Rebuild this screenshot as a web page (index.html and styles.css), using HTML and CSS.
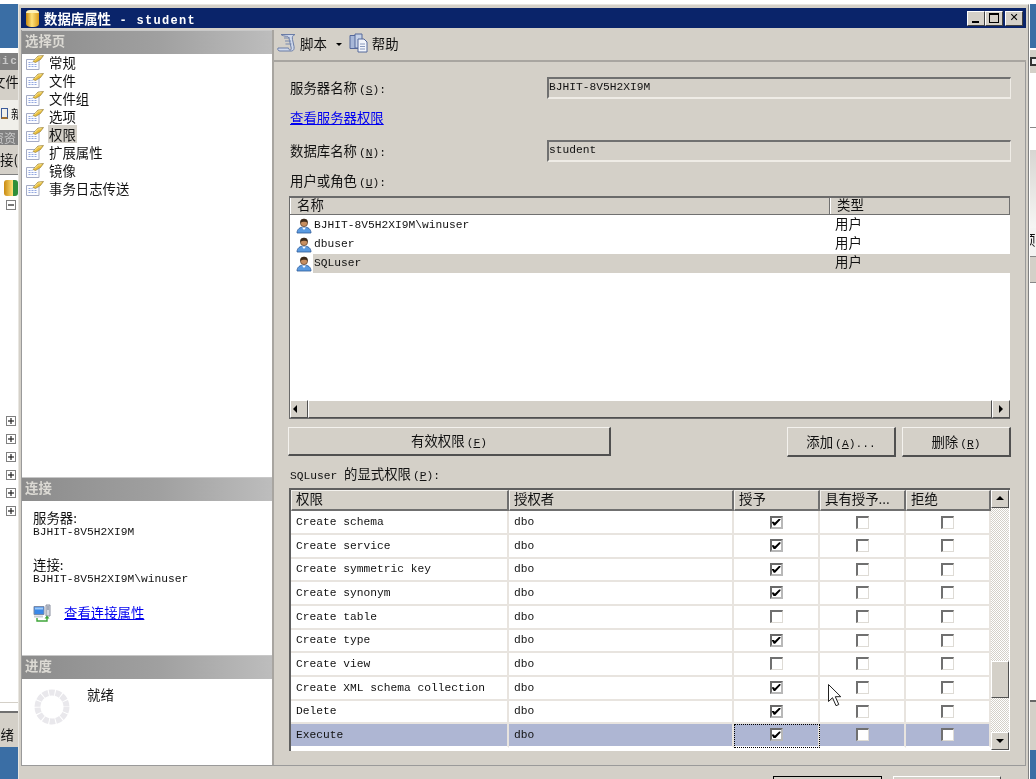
FILE: index.html
```html
<!DOCTYPE html>
<html lang="zh">
<head>
<meta charset="utf-8">
<title>数据库属性 - student</title>
<link rel="stylesheet" href="styles.css">
</head>
<body>
<svg class="defs" width="0" height="0" aria-hidden="true">
  <defs>
    <symbol id="page" viewBox="0 0 18 16">
      <path d="M.5 5.500H13v10H.5z" fill="#fbfcff" stroke="#a4abc4"/>
      <path d="M2.500 8.500h4M2.500 10.500h8M2.500 12.500h8" stroke="#93a8e0" stroke-dasharray="2 1"/>
      <path d="M7 7.500 12 2l5.500-.5-3 4-5 3z" fill="#e8bd3a" stroke="#8a7430" stroke-width=".6"/>
      <path d="M8.500 6.500 12.500 3l3-.3" fill="none" stroke="#fff2b0" stroke-width=".8"/>
    </symbol>
    <symbol id="user" viewBox="0 0 16 16">
      <path d="M1 15c0-4 3-6 7-6s7 2 7 6z" fill="#5a9ae0" stroke="#2f5a98" stroke-width=".8"/>
      <path d="M6 9.500 8 12l2-2.500" fill="#fff"/>
      <circle cx="8" cy="5" r="3.600" fill="#c88f60" stroke="#5a3e28" stroke-width=".7"/>
      <path d="M4.400 5C4 1.500 6 .8 8 .8s4 .7 3.600 4.200C10.500 3.400 6 3.400 4.400 5z" fill="#3c2a1a"/>
    </symbol>
    <symbol id="script" viewBox="0 0 20 20">
      <path d="M4 1.500h14c-2.500 1-3 2.500-2.500 5l1.500 7c.5 2.500-.5 4.500-2.500 4.500H3c-1.800 0-2.700-1.300-2-3h10.500c0 1.200.8 2 1.700 2 1 0 1.300-1.300.8-3L12.500 7.500C12 4.500 11 3 9.500 3.300 8 3.300 5 2.500 4 1.500z" fill="#cfd9ec" stroke="#6a7ca6"/>
      <path d="M7 5h6M8 8h6M8.500 11h6" stroke="#7587ae"/>
    </symbol>
    <symbol id="help" viewBox="0 0 20 20">
      <path d="M1 2.500h8v13H1z" fill="#a8b8d8" stroke="#55689a"/>
      <path d="M6 1h7v14H6z" fill="#c6d2e8" stroke="#55689a"/>
      <path d="M9 6h6l3 3v10H9z" fill="#f2f5fb" stroke="#55689a"/>
      <path d="M11 11h5M11 13.500h5M11 16h5" stroke="#8898bc"/>
    </symbol>
    <symbol id="conn" viewBox="0 0 18 18">
      <path d="M1 2.500h10v8H1z" fill="#3a88e8" stroke="#7a8aa8"/>
      <path d="M2 3.500h8v2H2z" fill="#9cc8f8"/>
      <path d="M1 11.500h9v2H1z" fill="#c8ccd4"/>
      <path d="M13 1h4v11h-4z" fill="#d4d8e0" stroke="#8a90a0"/>
      <path d="M14 3h2M14 5h2" stroke="#7a8090"/>
      <path d="M4 14v3h10v-3" fill="none" stroke="#3fa53a" stroke-width="1.400"/>
      <path d="m11.500 14.500 2.500-3 2.500 3z" fill="#3fa53a"/>
    </symbol>
  </defs>
</svg>

<div class="desktop">
  <aside class="bg-win bg-left">
    <div class="bg-blue"></div>
    <div class="bg-cap">Mic</div>
    <div class="bg-menu"><span class="shift">文件</span></div>
    <div class="bg-tool"><span class="tool-mark"></span><span>新</span></div>
    <div class="bg-res"><span class="shift">资资</span></div>
    <div class="bg-conn">接(</div>
    <div class="bg-tree">
      <div class="tree-db"></div>
      <span class="box minus"></span>
      <div class="tree-plus">
        <span class="box plus"></span><span class="box plus"></span><span class="box plus"></span>
        <span class="box plus"></span><span class="box plus"></span><span class="box plus"></span>
      </div>
    </div>
    <div class="bg-status"><span class="shift-more">就绪</span></div>
    <div class="bg-blue fill"></div>
  </aside>

  <aside class="bg-win bg-right">
    <div class="bg-blue"></div>
    <div class="r-tool"><span class="r-box"></span></div>
    <div class="r-white"></div>
    <div class="r-grad"></div>
    <div class="r-pre">预</div>
    <div class="r-line"></div>
    <div class="r-gray"></div>
    <div class="r-status"></div>
    <div class="bg-blue fill"></div>
  </aside>

  <section class="dialog">
    <header class="titlebar">
      <span class="can"></span>
      <span class="title"><span class="cjk">数据库属性</span><span class="mono"> - student</span></span>
      <div class="winbtns">
        <button class="winbtn"><i class="g-min"></i></button>
        <button class="winbtn"><i class="g-max"></i></button>
        <button class="winbtn gap"><span class="g-x">✕</span></button>
      </div>
    </header>

    <div class="body">
      <nav class="side">
        <div class="pane">
          <h2 class="pane-head">选择页</h2>
          <ul class="pages">
            <li><svg class="pg"><use href="#page"/></svg><span>常规</span></li>
            <li><svg class="pg"><use href="#page"/></svg><span>文件</span></li>
            <li><svg class="pg"><use href="#page"/></svg><span>文件组</span></li>
            <li><svg class="pg"><use href="#page"/></svg><span>选项</span></li>
            <li><svg class="pg"><use href="#page"/></svg><span class="cur">权限</span></li>
            <li><svg class="pg"><use href="#page"/></svg><span>扩展属性</span></li>
            <li><svg class="pg"><use href="#page"/></svg><span>镜像</span></li>
            <li><svg class="pg"><use href="#page"/></svg><span>事务日志传送</span></li>
          </ul>
        </div>
        <div class="pane">
          <h2 class="pane-head">连接</h2>
          <div class="conn">
            <div class="cjk ln">服务器:</div>
            <div class="mono ln">BJHIT-8V5H2XI9M</div>
            <div class="cjk ln next">连接:</div>
            <div class="mono ln">BJHIT-8V5H2XI9M\winuser</div>
            <div class="conn-link"><svg class="ci"><use href="#conn"/></svg><a class="cjk link" href="#">查看连接属性</a></div>
          </div>
        </div>
        <div class="pane">
          <h2 class="pane-head">进度</h2>
          <div class="prog">
            <svg class="spin" viewBox="0 0 36 36"><circle cx="18" cy="18" r="14.500" fill="none" stroke="#e9e8ec" stroke-width="6" stroke-dasharray="5.500 1"/></svg>
            <span class="cjk ready">就绪</span>
          </div>
        </div>
      </nav>

      <main class="main">
        <div class="toolbar">
          <svg class="ti"><use href="#script"/></svg><span class="cjk">脚本</span>
          <span class="caret"></span>
          <svg class="ti"><use href="#help"/></svg><span class="cjk">帮助</span>
        </div>
        <div class="panel">
          <div class="form-row first">
            <label class="cjk">服务器名称<span class="mn">(<u>S</u>):</span></label>
            <div class="field mono">BJHIT-8V5H2XI9M</div>
          </div>
          <a class="cjk link srv" href="#">查看服务器权限</a>
          <div class="form-row second">
            <label class="cjk">数据库名称<span class="mn">(<u>N</u>):</span></label>
            <div class="field mono">student</div>
          </div>
          <label class="cjk cap users">用户或角色<span class="mn">(<u>U</u>):</span></label>

          <div class="list">
            <div class="list-head cjk"><div class="h">名称</div><div class="h">类型</div></div>
            <div class="list-rows">
              <div class="lrow"><svg class="ui"><use href="#user"/></svg><span class="mono lname">BJHIT-8V5H2XI9M\winuser</span><span class="cjk ltype">用户</span></div>
              <div class="lrow"><svg class="ui"><use href="#user"/></svg><span class="mono lname">dbuser</span><span class="cjk ltype">用户</span></div>
              <div class="lrow sel"><svg class="ui"><use href="#user"/></svg><span class="mono lname">SQLuser</span><span class="cjk ltype">用户</span></div>
            </div>
            <div class="hscroll">
              <button class="sb-btn"><i class="ar-l"></i></button>
              <div class="hthumb"></div>
              <button class="sb-btn"><i class="ar-r"></i></button>
            </div>
          </div>

          <div class="actions">
            <button class="btn cjk wide">有效权限<span class="mn">(<u>F</u>)</span></button>
            <span class="spacer"></span>
            <button class="btn cjk std">添加<span class="mn">(<u>A</u>)...</span></button>
            <button class="btn cjk std">删除<span class="mn">(<u>R</u>)</span></button>
          </div>

          <label class="cap perms"><span class="mono">SQLuser </span><span class="cjk">的显式权限</span><span class="mn">(<u>P</u>):</span></label>

          <div class="grid">
            <div class="grid-main">
              <div class="ghead cjk"><div>权限</div><div>授权者</div><div>授予</div><div>具有授予...</div><div>拒绝</div></div>
              <div class="grow"><div class="mono">Create schema</div><div class="mono">dbo</div><div><i class="cb on"></i></div><div><i class="cb"></i></div><div><i class="cb"></i></div></div>
              <div class="grow"><div class="mono">Create service</div><div class="mono">dbo</div><div><i class="cb on"></i></div><div><i class="cb"></i></div><div><i class="cb"></i></div></div>
              <div class="grow"><div class="mono">Create symmetric key</div><div class="mono">dbo</div><div><i class="cb on"></i></div><div><i class="cb"></i></div><div><i class="cb"></i></div></div>
              <div class="grow"><div class="mono">Create synonym</div><div class="mono">dbo</div><div><i class="cb on"></i></div><div><i class="cb"></i></div><div><i class="cb"></i></div></div>
              <div class="grow"><div class="mono">Create table</div><div class="mono">dbo</div><div><i class="cb"></i></div><div><i class="cb"></i></div><div><i class="cb"></i></div></div>
              <div class="grow"><div class="mono">Create type</div><div class="mono">dbo</div><div><i class="cb on"></i></div><div><i class="cb"></i></div><div><i class="cb"></i></div></div>
              <div class="grow"><div class="mono">Create view</div><div class="mono">dbo</div><div><i class="cb"></i></div><div><i class="cb"></i></div><div><i class="cb"></i></div></div>
              <div class="grow"><div class="mono">Create XML schema collection</div><div class="mono">dbo</div><div><i class="cb on"></i></div><div><i class="cb"></i></div><div><i class="cb"></i></div></div>
              <div class="grow"><div class="mono">Delete</div><div class="mono">dbo</div><div><i class="cb on"></i></div><div><i class="cb"></i></div><div><i class="cb"></i></div></div>
              <div class="grow active"><div class="mono">Execute</div><div class="mono">dbo</div><div class="focus"><i class="cb on"></i></div><div><i class="cb"></i></div><div><i class="cb"></i></div></div>
            </div>
            <div class="vscroll">
              <button class="sb-btn v"><i class="ar-u"></i></button>
              <div class="track t1"></div>
              <div class="vthumb"></div>
              <div class="track t2"></div>
              <button class="sb-btn v"><i class="ar-d"></i></button>
            </div>
          </div>
        </div>
      </main>
    </div>

    <footer class="foot">
      <button class="okbtn primary"></button>
      <button class="okbtn second-ok"></button>
    </footer>
  </section>

  <svg class="pointer" viewBox="0 0 14 24"><path d="M.5.500v17l4-3.800 3.500 8 2.800-1.200-3.500-7.800h5.500z" fill="#fff" stroke="#222" stroke-width="1"/></svg>
</div>
</body>
</html>
```
FILE: styles.css
```css
* { box-sizing: border-box; }
html, body { margin: 0; height: 100%; overflow: hidden; background: #fff; }
.defs { position: absolute; }
ul { margin: 0; padding: 0; list-style: none; }
h2 { margin: 0; }
button { padding: 0; margin: 0; font: inherit; color: inherit; }
u { text-decoration: underline; }

.cjk { font-family: "Noto Sans CJK SC", "Noto Sans", sans-serif; font-size: 13.4px; }
.mono { font-family: "Liberation Mono", "Noto Sans CJK SC", monospace; font-size: 11.25px; white-space: pre; }
.mn { font-family: "Liberation Mono", monospace; font-size: 11.25px; white-space: pre; margin-left: 2px; }
.link { color: #0000f0; text-decoration: underline; }

.desktop {
  position: relative; width: 1036px; height: 779px; overflow: hidden;
  background: #fff; color: #111; filter: blur(.35px);
}

/* windows behind the dialog */
.bg-win { position: absolute; top: 0; height: 779px; display: flex; flex-direction: column; overflow: hidden; padding-top: 4px; background: #fff; }
.bg-left { left: 0; width: 18px; }
.bg-right { left: 1030px; width: 6px; }
.bg-blue { height: 44px; flex: none; background: #3a6ea5; }
.bg-blue.fill { flex: 1; }
.bg-cap { margin-top: 5px; height: 17px; background: #808080; color: #c8c8c8; font: bold 11px/17px "Liberation Mono", monospace; letter-spacing: 1.5px; text-indent: -6px; white-space: nowrap; }
.bg-menu { height: 30px; background: #d4d0c8; font: 13.4px/22px "Noto Sans CJK SC", sans-serif; white-space: nowrap; overflow: hidden; }
.shift { display: block; margin-left: -8px; }
.shift-more { display: block; margin-left: -13px; }
.bg-tool { height: 30px; background: #f0efea; display: flex; align-items: center; gap: 3px; font: 12px "Noto Sans CJK SC", sans-serif; overflow: hidden; white-space: nowrap; padding-bottom: 4px; }
.tool-mark { width: 7px; height: 11px; flex: none; border: 1px solid #3a5a9a; border-bottom: 2px solid #a07030; margin-left: 1px; }
.bg-res { height: 15px; background: #808080; color: #c8c8c8; font: 12px/15px "Noto Sans CJK SC", sans-serif; overflow: hidden; white-space: nowrap; }
.bg-conn { height: 30px; background: #d4d0c8; font: 13.4px/28px "Noto Sans CJK SC", sans-serif; white-space: nowrap; border-bottom: 1px solid #808080; }
.bg-tree { height: 528px; flex: none; background: #fff; padding-top: 5px; border-bottom: 1px solid #d4d0c8; display: flex; flex-direction: column; }
.tree-db { width: 14px; height: 16px; margin-left: 4px; border-radius: 3px; background: linear-gradient(90deg, #c98a10, #ffe27a); border-right: 5px solid #2f8f3a; }
.box { position: relative; display: block; width: 10px; height: 10px; margin-left: 6px; border: 1px solid #808080; background: #fff; }
.box::before { content: ""; position: absolute; left: 1px; top: 3px; width: 6px; height: 2px; background: #222; transform: scaleY(.6); }
.plus::after { content: ""; position: absolute; left: 3px; top: 1px; width: 2px; height: 6px; background: #222; transform: scaleX(.6); }
.minus { margin-top: 4px; }
.tree-plus { margin-top: 206px; display: flex; flex-direction: column; gap: 8px; }
.bg-status { margin-top: 8px; height: 36px; flex: none; background: #d4d0c8; border-top: 2px solid #707070; padding-top: 10px; font: 13.4px/22px "Noto Sans CJK SC", sans-serif; overflow: hidden; white-space: nowrap; }
.r-tool { margin-top: 2px; height: 23px; background: #d4d0c8; padding-top: 7px; }
.r-box { display: block; width: 8px; height: 9px; border: 2px solid #333; background: #eee; }
.r-white { height: 55px; background: #fff; border-bottom: 1px solid #888; }
.r-grad { height: 78px; margin-top: 22px; background: linear-gradient(#d8d6d2, #f6f6f4); }
.r-pre { height: 29px; margin-left: -8px; font: 13.4px/22px "Noto Sans CJK SC", sans-serif; background: #f4f4f2; border-bottom: 1px solid #888; white-space: nowrap; }
.r-line { height: 26px; background: #d4d0c8; border-bottom: 1px solid #888; }
.r-gray { height: 419px; background: #fff; border-bottom: 2px solid #666; }
.r-status { height: 48px; flex: none; background: #d4d0c8; }

/* the dialog */
.dialog {
  position: absolute; left: 18px; top: 4px; width: 1011px; height: 775px;
  padding: 3px 2px 0; background: #d4d0c8;
  border: 1px solid #e8e6e1; border-right-color: #808080; border-bottom: 0;
  display: flex; flex-direction: column; overflow: hidden;
}
.titlebar { height: 20px; flex: none; background: #0a246a; color: #fff; display: flex; align-items: center; padding: 0 3px 0 5px; }
.can { width: 13px; height: 17px; flex: none; margin-right: 5px; border-radius: 4px 4px 5px 5px / 3px 3px 3px 3px; background: linear-gradient(90deg, #c98a10, #ffe27a 45%, #d99a18); border-top: 3px solid #fff2b8; }
.title { font-weight: bold; white-space: pre; }
.title .mono { font-size: 12px; letter-spacing: 1.3px; }
.winbtns { margin-left: auto; display: flex; }
.winbtn { position: relative; width: 18px; height: 15px; background: #d4d0c8; border: 1px solid; border-color: #fff #404040 #404040 #fff; display: block; }
.winbtn.gap { margin-left: 2px; }
.g-min { position: absolute; left: 4px; bottom: 2px; width: 7px; height: 2px; background: #000; }
.g-max { position: absolute; left: 3px; top: 1px; width: 10px; height: 10px; border: 1px solid #000; border-top-width: 2px; }
.g-x { position: absolute; left: 0; right: 0; top: -1px; font: bold 11px/14px "DejaVu Sans", sans-serif; color: #000; text-align: center; }

.body { height: 736px; flex: none; margin-top: 2px; display: flex; border-bottom: 1px solid #9a9a9a; }

/* left pages column */
.side { width: 251px; flex: none; border-left: 1px solid #9a9a9a; background: #fff; display: grid; grid-template-rows: 447px 178px 1fr; }
.pane { min-height: 0; }
.pane-head { height: 24px; padding-left: 3px; background: linear-gradient(90deg, #8c8c8c, #a0a0a0 55%, #bdbdbd); border-top: 1px solid #c8c8c8; color: #dcdad4; font: bold 13.4px/18px "Noto Sans CJK SC", sans-serif; }
.pages { margin-top: -1px; }
.pages li { height: 18px; display: flex; align-items: center; padding-left: 4px; font: 13.4px/18px "Noto Sans CJK SC", sans-serif; }
.pg { width: 18px; height: 16px; flex: none; margin-right: 4px; }
.pages span { padding: 0 1px; }
.cur { background: #d4d0c8; }
.conn { padding: 10px 0 0 11px; }
.ln { height: 14px; line-height: 14px; }
.ln.cjk { line-height: 12px; }
.next { margin-top: 19px; }
.conn-link { margin-top: 18px; display: flex; align-items: center; height: 18px; }
.conn-link .link { line-height: 14px; padding-bottom: 2px; }
.ci { width: 18px; height: 18px; flex: none; margin-right: 13px; }
.prog { display: flex; padding: 8px 0 0 12px; }
.spin { width: 36px; height: 36px; flex: none; margin-top: 2px; }
.ready { margin-left: 17px; line-height: 14px; }

/* right column */
.main { flex: 1; min-width: 0; border-left: 2px solid #a8a5a0; display: flex; flex-direction: column; }
.toolbar { height: 32px; flex: none; display: flex; align-items: center; padding: 0 0 4px 3px; border-bottom: 2px solid #a8a5a0; }
.ti { width: 20px; height: 20px; flex: none; margin-right: 3px; }
.caret { width: 0; height: 0; margin: 2px 7px 0 9px; border: 3px solid transparent; border-top: 3px solid #000; border-bottom: 0; }
.panel { flex: 1; padding: 15px 14px 0; border-right: 1px solid #9a9a9a; display: flex; flex-direction: column; }

.form-row { height: 22px; flex: none; display: grid; grid-template-columns: 259px 1fr; align-items: center; }
.form-row label { padding: 0 0 2px 2px; }
.cap { padding-left: 2px; }
.form-row.second { margin-top: 13px; }
.field { height: 22px; border: 2px solid; border-color: #707070 #efece6 #efece6 #707070; border-width: 2px 1px 2px 2px; line-height: 16px; }
.srv { height: 17px; margin: 11px 0 0 2px; line-height: 15px; flex: none; align-self: flex-start; }
.cap { display: block; height: 16px; line-height: 12px; flex: none; }
.users { margin-top: 12px; }

.list { height: 223px; flex: none; margin: 6px 1px 0; border: solid #6a6a6a; border-width: 2px 0 1px 1px; display: flex; flex-direction: column; background: #fff; }
.list-head { height: 17px; flex: none; display: grid; grid-template-columns: 540px 1fr; background: #d4d0c8; border-bottom: 1px solid #707070; }
.h { padding-left: 6px; line-height: 13px; border-right: 1px solid #707070; border-left: 1px solid #fff; }
.list-rows { flex: 1; padding-top: 1px; }
.lrow { height: 19px; display: flex; align-items: center; padding-left: 6px; }
.ui { width: 16px; height: 16px; flex: none; }
.lname { flex: none; width: 523px; height: 19px; line-height: 19px; padding-left: 2px; }
.lrow.sel { background: linear-gradient(90deg, #fff 23px, #d4d0c8 23px); }
.ltype { line-height: 15px; padding-bottom: 4px; }
.hscroll { height: 18px; flex: none; display: flex; background: #d4d0c8; }
.sb-btn { position: relative; width: 18px; height: 18px; flex: none; background: #d4d0c8; border: 1px solid; border-color: #fff #505050 #505050 #fff; display: block; }
.hthumb { flex: 1; border: 1px solid; border-color: #fff #505050 #505050 #fff; }
.sb-btn i { position: absolute; width: 0; height: 0; border: 4px solid transparent; }
.ar-l { left: 2px; top: 4px; border-right-color: #000 !important; border-left-width: 0 !important; }
.ar-r { left: 6px; top: 4px; border-left-color: #000 !important; border-right-width: 0 !important; }
.ar-u { left: 4px; top: 5px; border-bottom-color: #000 !important; border-top-width: 0 !important; }
.ar-d { left: 4px; top: 6px; border-top-color: #000 !important; border-bottom-width: 0 !important; }

.actions { margin-top: 8px; height: 30px; flex: none; display: flex; gap: 6px; }
.spacer { flex: 1; }
.btn { height: 30px; padding-bottom: 2px; background: #d4d0c8; border: 2px solid; border-color: #f4f2ee #505050 #505050 #f4f2ee; border-width: 1px 2px 2px 1px; white-space: nowrap; color: #111; }
.wide { width: 323px; height: 29px; }
.std { width: 109px; }
.perms { margin-top: 10px; }

.grid { margin: 5px 1px 0; height: 263px; flex: none; display: flex; border: solid #5f5f5f; border-width: 2px 0 0 2px; background: #fff; }
.grid-main { width: 700px; flex: none; }
.ghead, .grow { display: grid; grid-template-columns: 218px 225px 86px 86px 85px; }
.ghead { height: 21px; background: #d4d0c8; }
.ghead > div { padding-left: 4px; line-height: 14px; border: 1px solid; border-color: #f4f2ee #707070 #707070 #f4f2ee; border-width: 1px 2px 2px 1px; white-space: nowrap; overflow: hidden; }
.grow { height: 23.67px; }
.grow > div { padding-left: 5px; line-height: 22px; border-right: 2px solid #e8e4df; border-bottom: 2px solid #e8e4df; display: flex; align-items: center; min-width: 0; }
.grow > div:nth-child(n+3) { justify-content: center; padding: 0; }
.active { background: #aeb6d3; }
.active > div { border-bottom-color: #fff !important; }
.focus { outline: 1px dotted #000; outline-offset: -1px; }
.cb { position: relative; display: block; width: 13px; height: 13px; background: #fff; border: 2px solid; border-color: #707070 #dedbd5 #dedbd5 #707070; border-width: 2px 1px 1px 2px; }
.cb.on { border-color: #6a6a6a #b8b8b8 #b8b8b8 #6a6a6a; border-width: 2px; }
.cb.on::after { content: ""; position: absolute; left: 0; top: 1px; width: 9px; height: 7px; background: #000; clip-path: polygon(0 45%, 28% 45%, 36% 62%, 85% 0, 100% 0, 100% 18%, 40% 100%, 25% 100%); }
.vscroll { width: 18px; flex: none; display: flex; flex-direction: column; }
.v { height: 18px; }
.track { flex: none; background: repeating-conic-gradient(#d4d0c8 0 25%, #fff 0 50%) 0 0 / 2px 2px; }
.t1 { height: 153px; }
.t2 { height: 34px; }
.vthumb { height: 37px; flex: none; background: #d4d0c8; border: 1px solid; border-color: #fff #505050 #505050 #fff; }

.foot { margin-top: 10px; display: flex; gap: 11px; padding-right: 25px; justify-content: flex-end; flex: 1; }
.okbtn { width: 109px; height: 30px; background: #d4d0c8; border: 1px solid; border-color: #fff #505050 #505050 #fff; }
.second-ok { width: 108px; }
.okbtn.primary { border: 1px solid #000; }

.pointer { position: absolute; left: 828px; top: 684px; width: 14px; height: 24px; }
```
